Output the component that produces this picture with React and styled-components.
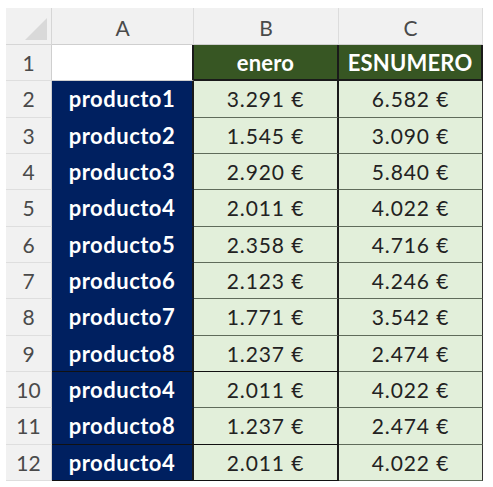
import React from 'react'
import styled, { createGlobalStyle } from 'styled-components'

const GlobalStyle = createGlobalStyle`
  html, body {
    margin: 0;
    background: #fff;
    font-family: Lato, "Open Sans", sans-serif;
  }
`

const Page = styled.div`
  padding: 8px 0 0 6px;
`

const Sheet = styled.div`
  display: grid;
  grid-template-columns: 46px 142px 145px 144px;
  grid-template-rows: 37px repeat(12, 36.33px);
`

const Cell = styled.div`
  box-sizing: border-box;
  display: flex;
  align-items: center;
  justify-content: center;
  white-space: nowrap;
`

const Corner = styled(Cell)`
  background: #f1f1f1;
  border-right: 1px solid #d6d6d6;
  border-bottom: 1px solid #d6d6d6;
  justify-content: flex-end;
  align-items: flex-end;
  padding: 0 4px 4px 0;
`

const ColHead = styled(Cell)`
  background: #f1f1f1;
  color: #4a4a4a;
  font-size: 21px;
  padding-top: 2px;
  border-right: 1px solid #dcdcdc;
  border-bottom: 1px solid #cfcfcf;
`

const RowHead = styled(Cell)`
  background: #f1f1f1;
  color: #4a4a4a;
  font-size: 21px;
  border-right: 1px solid #cfcfcf;
  border-bottom: 1px solid #dedede;
`

const Blank = styled(Cell)`
  background: #fff;
  border-right: 2px solid #1a1a1a;
  border-bottom: 1px solid #d0d0d0;
`

const HeadCell = styled(Cell)`
  background: #375623;
  color: #fff;
  font-weight: 700;
  font-size: 22px;
  letter-spacing: 0.2px;
  border-right: 2px solid #1a1a1a;
  border-bottom: 2px solid #1a1a1a;
`

const NameCell = styled(Cell)`
  background: #002060;
  color: #fff;
  font-weight: 700;
  font-size: 22px;
  letter-spacing: 0.5px;
  border-right: 2px solid #1a1a1a;
  border-bottom: 1px solid ${p => (p.$strong ? '#111' : '#002060')};
`

const ValueCell = styled(Cell)`
  background: #e2efda;
  color: #222;
  font-size: 21px;
  letter-spacing: 0.9px;
  border-right: ${p => (p.$last ? '1px solid #333' : '2px solid #1a1a1a')};
  border-bottom: 1px solid ${p => (p.$strong ? '#111' : '#5f6b5a')};
`

const rows = [
  ['producto1', '3.291 €', '6.582 €'],
  ['producto2', '1.545 €', '3.090 €'],
  ['producto3', '2.920 €', '5.840 €'],
  ['producto4', '2.011 €', '4.022 €'],
  ['producto5', '2.358 €', '4.716 €'],
  ['producto6', '2.123 €', '4.246 €'],
  ['producto7', '1.771 €', '3.542 €'],
  ['producto8', '1.237 €', '2.474 €'],
  ['producto4', '2.011 €', '4.022 €'],
  ['producto8', '1.237 €', '2.474 €'],
  ['producto4', '2.011 €', '4.022 €'],
]

// rows whose lower edge carries the dark border on A:B
const strongRows = [7, 9, 10]

export default function App() {
  return (
    <Page>
      <GlobalStyle />
      <Sheet>
        <Corner>
          <svg width="22" height="22" viewBox="0 0 22 22">
            <polygon points="22,0 22,22 0,22" fill="#d9d9d9" />
          </svg>
        </Corner>
        <ColHead>A</ColHead>
        <ColHead>B</ColHead>
        <ColHead>C</ColHead>

        <RowHead>1</RowHead>
        <Blank />
        <HeadCell>enero</HeadCell>
        <HeadCell>ESNUMERO</HeadCell>

        {rows.map((r, i) => {
          const strong = strongRows.includes(i)
          return (
            <React.Fragment key={i}>
              <RowHead>{i + 2}</RowHead>
              <NameCell $strong={strong}>{r[0]}</NameCell>
              <ValueCell $strong={strong}>{r[1]}</ValueCell>
              <ValueCell $last>{r[2]}</ValueCell>
            </React.Fragment>
          )
        })}
      </Sheet>
    </Page>
  )
}
